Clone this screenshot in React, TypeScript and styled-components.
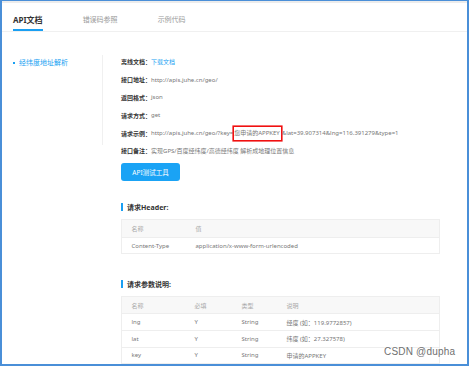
import React from "react";
import styled, { createGlobalStyle } from "styled-components";

const GlobalStyle = createGlobalStyle`
  html, body {
    margin: 0;
    padding: 0;
    background: #ffffff;
  }
  body {
    font-family: "Noto Sans", "Noto Sans CJK SC", sans-serif;
    color: #666;
  }
`;

const Frame = styled.div`
  position: relative;
  width: 469px;
  height: 366px;
  box-sizing: border-box;
  border-left: 2px solid #4a8fd8;
  border-top: 1px solid #4a8fd8;
  border-right: 2px solid #4a8fd8;
  border-bottom: 2px solid #4a8fd8;
  overflow: hidden;
  background: #fff;
`;

const TopShade = styled.div`
  height: 2px;
  background: #ececec;
`;

const TabBar = styled.div`
  display: flex;
  gap: 40px;
  height: 28px;
  padding-left: 11px;
  border-bottom: 1px solid #f0f0f0;
`;

const Tab = styled.div<{ $active?: boolean }>`
  padding-top: 10px;
  padding-bottom: 2px;
  line-height: 14px;
  height: 14px;
  font-size: ${(p) => (p.$active ? "8px" : "7px")};
  font-weight: ${(p) => (p.$active ? 700 : 400)};
  color: ${(p) => (p.$active ? "#333" : "#999")};
  border-bottom: 2px solid ${(p) => (p.$active ? "#1a9ff2" : "transparent")};
`;

const Body = styled.div`
  display: flex;
  align-items: flex-start;
`;

const Sidebar = styled.div`
  width: 101px;
  height: 90px;
  margin-top: 23px;
  box-sizing: border-box;
  border-right: 1px solid #f0f0f0;
  padding: 3px 0 0 11px;
`;

const NavItem = styled.div`
  display: flex;
  align-items: center;
  gap: 4px;
  font-size: 7px;
  line-height: 10px;
  color: #1a9ff2;

  &::before {
    content: "";
    width: 2px;
    height: 2px;
    background: #1a9ff2;
  }
`;

const Main = styled.div`
  margin-left: 18px;
  padding-top: 21px;
  display: flex;
  flex-direction: column;
  width: 317px;
`;

const InfoRow = styled.div`
  height: 17.8px;
  display: flex;
  align-items: center;
  font-size: 6px;
  white-space: nowrap;
`;

const Label = styled.span`
  color: #333;
  font-weight: 700;
`;

const Value = styled.span<{ $link?: boolean }>`
  color: ${(p) => (p.$link ? "#1a9ff2" : "#777")};
`;

const KeyMark = styled.span`
  display: inline-block;
  line-height: 9px;
  padding: 2px 1px 2px 0;
  margin: -4px 0;
  border-width: 1px;
  border-style: solid;
  border-color: #f01010;
  box-shadow: 0 0 0 0.6px #f01010;
  color: #777;
`;

const TestButton = styled.button`
  margin-top: 3px;
  width: 59px;
  height: 18px;
  border: none;
  border-radius: 3px;
  background: #1aa3f5;
  color: #fff;
  font-family: inherit;
  font-size: 6.5px;
  padding: 0;
  cursor: pointer;
`;

const Heading = styled.div<{ $top: number }>`
  margin-top: ${(p) => p.$top}px;
  display: flex;
  align-items: center;
  gap: 4px;
  height: 10px;
  font-size: 7px;
  font-weight: 700;
  color: #333;

  &::before {
    content: "";
    width: 2px;
    height: 8px;
    background: #1a9ff2;
  }
`;

const Table = styled.div<{ $cols: string }>`
  margin-top: 7px;
  width: 317px;
  margin-left: -0.5px;
  border: 1px solid #eeeeee;
  border-bottom: none;
  display: grid;
  grid-template-columns: ${(p) => p.$cols};
  font-size: 6px;
`;

const Cell = styled.div<{ $head?: boolean }>`
  height: ${(p) => (p.$head ? "16.5px" : "15.6px")};
  display: flex;
  align-items: center;
  padding-left: 10px;
  border-bottom: 1px solid #eeeeee;
  background: ${(p) => (p.$head ? "#f8f8f8" : "#fff")};
  color: ${(p) => (p.$head ? "#aaa" : "#777")};
  white-space: nowrap;
`;

const Watermark = styled.div`
  position: absolute;
  left: 382px;
  top: 345px;
  font-family: "Liberation Sans", Arial, sans-serif;
  font-size: 10px;
  line-height: 12px;
  color: #707070;
  text-shadow: 0 0 2px #fff, 0 0 2px #fff;
  letter-spacing: 0.2px;
`;

const headerRows = [["Content-Type", "application/x-www-form-urlencoded"]];

const paramRows = [
  ["lng", "Y", "String", "经度 (如：119.9772857)"],
  ["lat", "Y", "String", "纬度 (如：27.327578)"],
  ["key", "Y", "String", "申请的APPKEY"],
];

export default function App() {
  return (
    <Frame>
      <GlobalStyle />
      <TopShade />
      <TabBar>
        <Tab $active>API文档</Tab>
        <Tab>错误码参照</Tab>
        <Tab>示例代码</Tab>
      </TabBar>
      <Body>
        <Sidebar>
          <NavItem>经纬度地址解析</NavItem>
        </Sidebar>
        <Main>
          <InfoRow>
            <Label>离线文档：</Label>
            <Value $link>下载文档</Value>
          </InfoRow>
          <InfoRow>
            <Label>接口地址：</Label>
            <Value>http://apis.juhe.cn/geo/</Value>
          </InfoRow>
          <InfoRow>
            <Label>返回格式：</Label>
            <Value>json</Value>
          </InfoRow>
          <InfoRow>
            <Label>请求方式：</Label>
            <Value>get</Value>
          </InfoRow>
          <InfoRow>
            <Label>请求示例：</Label>
            <Value>
              http://apis.juhe.cn/geo/?key=<KeyMark>您申请的APPKEY</KeyMark>
              &amp;lat=39.907314&amp;lng=116.391279&amp;type=1
            </Value>
          </InfoRow>
          <InfoRow>
            <Label>接口备注：</Label>
            <Value>实现GPS/百度经纬度/高德经纬度 解析成地理位置信息</Value>
          </InfoRow>
          <TestButton>API测试工具</TestButton>

          <Heading $top={21.5}>请求Header:</Heading>
          <Table $cols="64px 1fr">
            <Cell $head>名称</Cell>
            <Cell $head>值</Cell>
            {headerRows.map((r) =>
              r.map((c, i) => <Cell key={r[0] + i}>{c}</Cell>)
            )}
          </Table>

          <Heading $top={24.5}>请求参数说明:</Heading>
          <Table $cols="63px 47px 45px 1fr">
            <Cell $head>名称</Cell>
            <Cell $head>必填</Cell>
            <Cell $head>类型</Cell>
            <Cell $head>说明</Cell>
            {paramRows.map((r) =>
              r.map((c, i) => <Cell key={r[0] + i}>{c}</Cell>)
            )}
          </Table>
        </Main>
      </Body>
      <Watermark>CSDN @dupha</Watermark>
    </Frame>
  );
}
